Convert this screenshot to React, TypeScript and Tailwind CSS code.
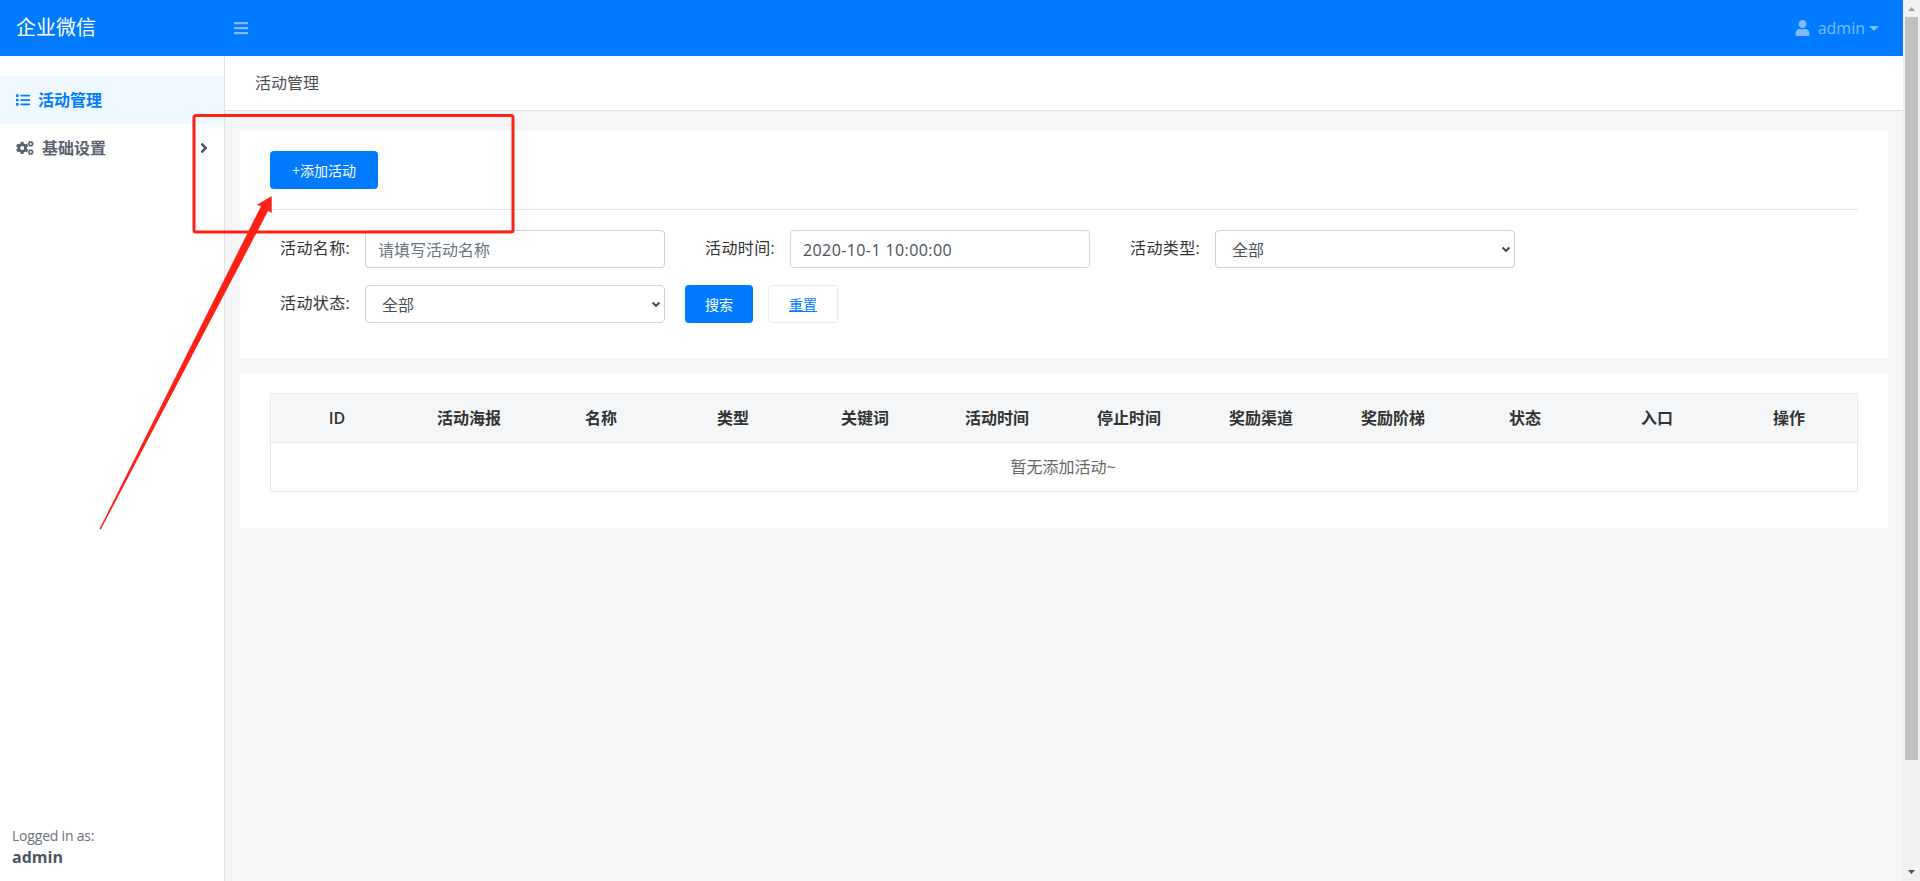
import type { ReactNode } from 'react';
import { FaAngleRight, FaBars, FaCogs, FaList, FaUser } from 'react-icons/fa';

const CJK = '"Open Sans","Noto Sans CJK SC",sans-serif';

const columns = ['ID', '活动海报', '名称', '类型', '关键词', '活动时间', '停止时间', '奖励渠道', '奖励阶梯', '状态', '入口', '操作'];

function Chevron() {
  return (
    <svg viewBox="0 0 16 16" className="absolute right-[3px] top-[13px] h-[10px] w-[10px]" fill="none" stroke="#444" strokeWidth="3.2">
      <path d="M2.5 5.5 8 11l5.5-5.5" />
    </svg>
  );
}

function Field({ label, children }: { label: string; children: ReactNode }) {
  return (
    <div className="flex w-[385px] items-start justify-between">
      <span className="pt-[6px] text-[16px] leading-[24px] tracking-[0.4px] text-[#333]">{label}</span>
      {children}
    </div>
  );
}

function Select() {
  return (
    <div className="relative h-[38px] w-[300px] rounded-[4px] border border-[#ced4da] bg-white pl-[16px] text-[16px] leading-[38px] text-[#495057]">
      全部
      <Chevron />
    </div>
  );
}

export default function App() {
  return (
    <div className="relative flex h-[881px] w-[1920px] overflow-hidden bg-[#f4f6f8]" style={{ fontFamily: CJK }}>
      <div className="flex min-w-0 flex-1 flex-col">
        <header className="flex h-[56px] shrink-0 items-center bg-[#007bff]">
          <div className="w-[234px] pl-[16px] text-[20px] text-white">企业微信</div>
          <FaBars className="h-[16px] w-[14px] text-white/50" />
          <div className="ml-auto flex items-center pr-[24px] text-[16px] text-white/50">
            <FaUser className="mr-[8px] h-[16px] w-[15px]" />
            <span>admin</span>
            <span className="ml-[4px] h-0 w-0 border-x-[5px] border-t-[5px] border-x-transparent border-t-white/50" />
          </div>
        </header>
        <div className="flex min-h-0 flex-1">
          <aside className="flex w-[225px] shrink-0 flex-col border-r border-[#dee2e6] bg-white pt-[20px]">
            <div className="flex h-[48px] items-center bg-[#f0f8ff] pl-[16px] text-[16px] font-semibold text-[#007bff]">
              <FaList className="mr-[8px] h-[14px] w-[14px]" />
              活动管理
            </div>
            <div className="flex h-[48px] items-center px-[16px] text-[16px] font-semibold text-[#5a6270]">
              <FaCogs className="mr-[8px] h-[14px] w-[18px]" />
              基础设置
              <FaAngleRight className="ml-auto h-[16px] w-[8px] text-[#4a5568]" />
            </div>
            <div className="mt-auto pb-[13px] pl-[12px]">
              <div className="text-[14px] leading-[20px] tracking-[-0.2px] text-[#6b7280]">Logged in as:</div>
              <div className="text-[16px] font-bold leading-[22px] text-[#4b5563]">admin</div>
            </div>
          </aside>
          <main className="min-w-0 flex-1">
            <div className="flex h-[55px] items-center border-b border-[#dee2e6] bg-white pl-[30px] text-[16px] text-[#495057]">活动管理</div>
            <div className="px-[15px] pt-[20px]">
              <section className="h-[227px] bg-white px-[30px] pt-[20px]">
                <button className="block h-[38px] w-[108px] rounded-[4px] bg-[#007bff] text-[14px] text-white">+添加活动</button>
                <div className="mt-[20px] border-t border-[#e5e7eb]" />
                <div className="mt-[20px] flex flex-wrap gap-y-[17px] pl-[10px]">
                  <div className="mr-[40px]">
                    <Field label="活动名称:">
                      <div className="h-[38px] w-[300px] rounded-[4px] border border-[#ced4da] bg-white pl-[12px] text-[16px] leading-[38px] text-[#6c757d]">请填写活动名称</div>
                    </Field>
                  </div>
                  <div className="mr-[40px]">
                    <Field label="活动时间:">
                      <div className="h-[38px] w-[300px] rounded-[4px] border border-[#ced4da] bg-white pl-[12px] text-[16px] leading-[38px] tracking-[0.4px] text-[#495057]">2020-10-1 10:00:00</div>
                    </Field>
                  </div>
                  <Field label="活动类型:"><Select /></Field>
                  <div className="flex w-full items-center">
                    <Field label="活动状态:"><Select /></Field>
                    <button className="ml-[20px] h-[38px] w-[68px] rounded-[4px] bg-[#007bff] text-[14px] text-white">搜索</button>
                    <button className="ml-[15px] h-[38px] w-[70px] rounded-[4px] border border-[#e9ecef] bg-white text-[14px] text-[#007bff] underline">重置</button>
                  </div>
                </div>
              </section>
              <section className="mt-[15px] h-[155px] bg-white px-[30px] pt-[20px]">
                <div className="border border-[#e5e7eb]">
                  <div className="grid h-[49px] grid-cols-12 items-center border-b border-[#e5e7eb] bg-[#f4f6f8] pr-[2px] text-center text-[16px] font-semibold text-[#333]">
                    {columns.map((c) => <div key={c}>{c}</div>)}
                  </div>
                  <div className="flex h-[48px] items-center justify-center pr-[2px] text-[16px] text-[#666]">暂无添加活动~</div>
                </div>
              </section>
            </div>
          </main>
        </div>
      </div>
      <div className="flex h-full w-[17px] shrink-0 flex-col items-center bg-[#f1f1f1]">
        <svg viewBox="0 0 17 17" className="h-[17px] w-[17px] shrink-0 fill-[#a3a3a3]"><path d="M8.500 7 12 11H5z" /></svg>
        <div className="h-[743px] w-[13px] bg-[#c1c1c1]" />
        <svg viewBox="0 0 17 17" className="mt-auto h-[17px] w-[17px] shrink-0 fill-[#505050]"><path d="M8.500 10 12 6H5z" /></svg>
      </div>
      <svg className="pointer-events-none absolute left-0 top-0 h-[881px] w-[1920px]" viewBox="0 0 1920 881">
        <rect x="194" y="115.500" width="319" height="116.500" rx="2" fill="none" stroke="#ff2116" strokeWidth="3" />
        <path d="M99.500 529 261 206 256.700 205 271.700 196 271.700 213 268 211 100.800 529.500Z" fill="#ff2116" />
      </svg>
    </div>
  );
}
